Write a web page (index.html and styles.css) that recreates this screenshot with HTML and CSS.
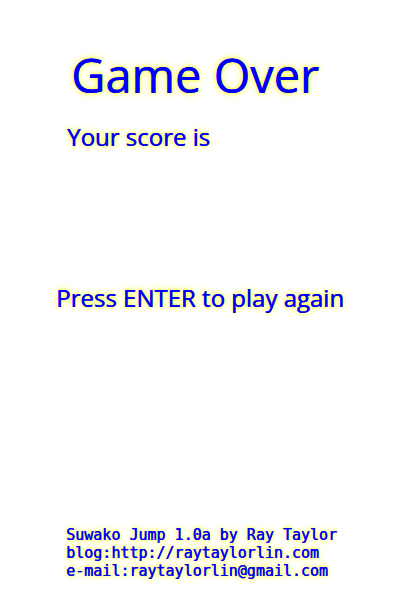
FILE: index.html
```html
<!DOCTYPE html>
<html>
<head>
<meta charset="utf-8">
<link rel="stylesheet" href="styles.css">
</head>
<body>
<div class="screen">
  <div class="title">Game Over</div>
  <div class="score">Your score is</div>
  <div class="prompt">Press ENTER to play again</div>
  <div class="credits">
    <div>Suwako Jump 1.0a by Ray Taylor</div>
    <div>blog:http://raytaylorlin.com</div>
    <div>e-mail:raytaylorlin@gmail.com</div>
  </div>
</div>
</body>
</html>
```

FILE: styles.css
```css
html, body {
  margin: 0;
  padding: 0;
  background: #ffffff;
}
.screen {
  width: 400px;
  height: 600px;
  display: flex;
  flex-direction: column;
  color: #0000ff;
  font-family: "Open Sans", "Noto Sans", sans-serif;
  font-weight: 400;
  text-shadow: 0.5px 0 0 #0000ff, 0 0 3px #ffff30, 0 0 5px #ffff50, 0 0 8px #ffff90;
}
.title {
  font-size: 47px;
  line-height: 50px;
  margin: 50px 0 0 71px;
  white-space: nowrap;
}
.score {
  font-size: 24px;
  line-height: 30px;
  margin: 22px 0 0 67px;
  white-space: nowrap;
}
.prompt {
  font-size: 24px;
  line-height: 30px;
  margin: 131px 0 0 56px;
  white-space: nowrap;
}
.credits {
  margin: auto 0 20px 66px;
  font-family: "DejaVu Sans Mono", monospace;
  font-size: 15px;
  line-height: 18px;
  white-space: nowrap;
}
```
